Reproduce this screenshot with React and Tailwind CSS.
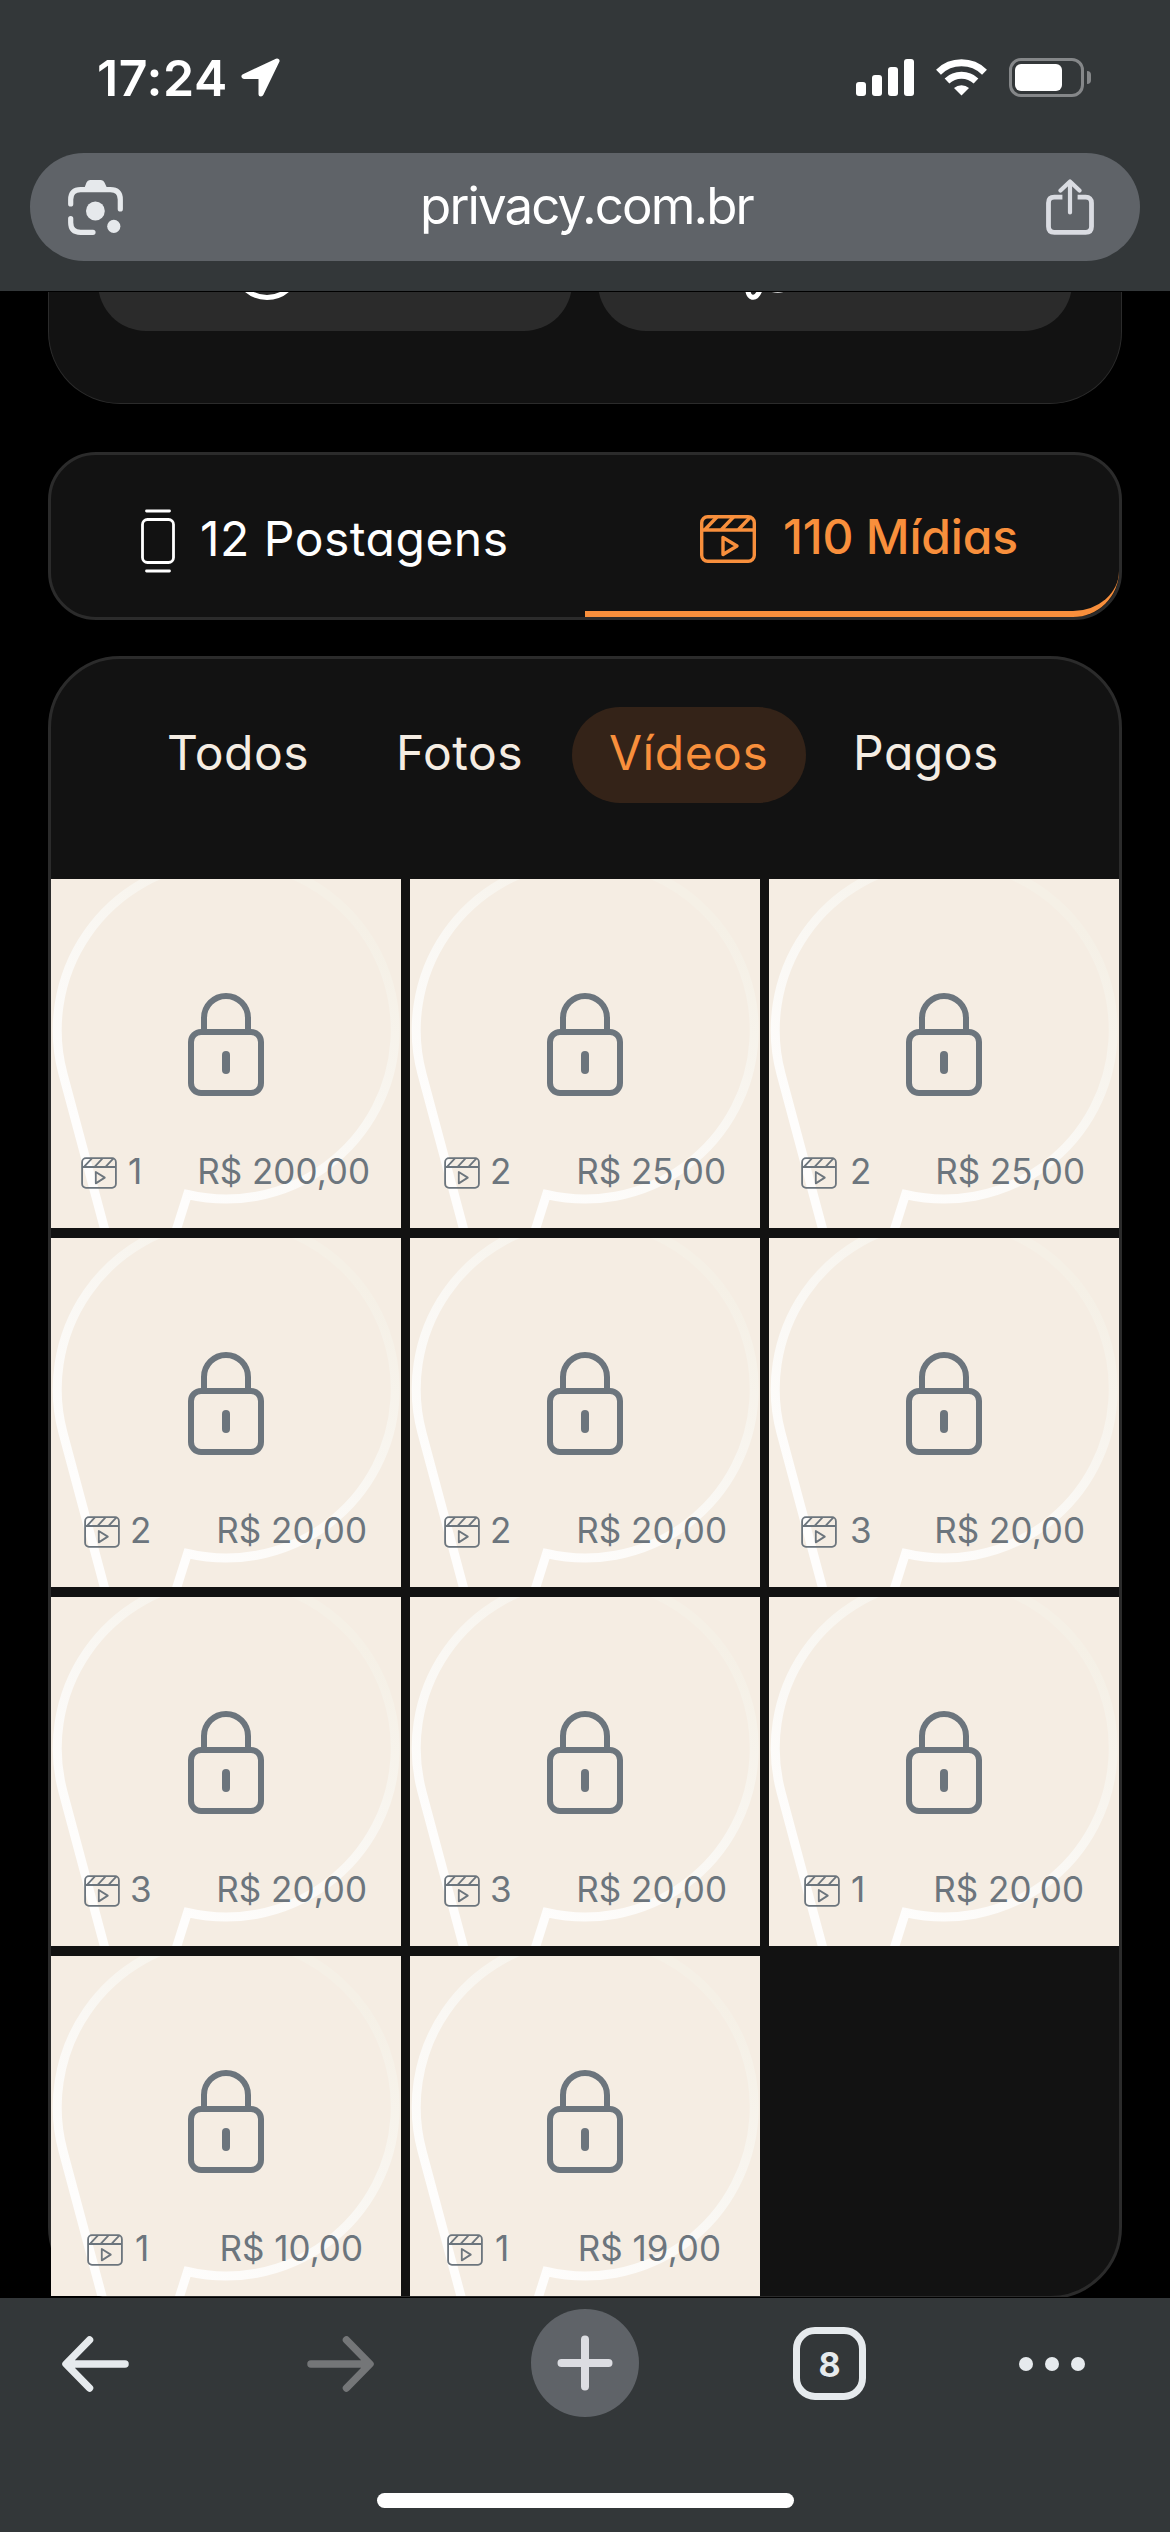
import { useState } from 'react';
import clsx from 'clsx';

const filters = [
  { name: 'Todos', className: 'w-[214px] pl-[36px]' },
  { name: 'Fotos', className: 'w-[227px] pl-[51px]' },
  { name: 'Vídeos', className: 'w-[234px] pl-[37px]' },
  { name: 'Pagos', className: 'w-[214px] pl-[47px]' },
];

const media = [
  { id: 1, count: 1, price: '200,00', className: 'pl-[30px] pr-[31px] gap-[11px]' },
  { id: 2, count: 2, price: '25,00', className: 'pl-[34px] pr-[34px] gap-[10px]' },
  { id: 3, count: 2, price: '25,00', className: 'pl-[32px] pr-[34px] gap-[13px]' },
  { id: 4, count: 2, price: '20,00', className: 'pl-[33px] pr-[34px] gap-[10px]' },
  { id: 5, count: 2, price: '20,00', className: 'pl-[34px] pr-[33px] gap-[10px]' },
  { id: 6, count: 3, price: '20,00', className: 'pl-[32px] pr-[34px] gap-[13px]' },
  { id: 7, count: 3, price: '20,00', className: 'pl-[33px] pr-[34px] gap-[10px]' },
  { id: 8, count: 3, price: '20,00', className: 'pl-[34px] pr-[33px] gap-[10px]' },
  { id: 9, count: 1, price: '20,00', className: 'pl-[35px] pr-[35px] gap-[11px]' },
  { id: 10, count: 1, price: '10,00', className: 'pl-[36px] pr-[38px] gap-[12px]' },
  { id: 11, count: 1, price: '19,00', className: 'pl-[37px] pr-[39px] gap-[12px]' },
];

function VideoIcon({ className, strokeWidth = 3.4 }) {
  return (
    <svg className={className} viewBox="0 0 56 48" preserveAspectRatio="none" fill="none" stroke="currentColor" strokeWidth={strokeWidth} strokeLinejoin="round">
      <rect x="1.7" y="1.7" width="52.6" height="44.6" rx="6" />
      <path d="M2 15h52M5 14.5L17 2M21.5 14.5L33.5 2M38.5 14.5L50.5 2M23 22.5v17l14-8.5z" />
    </svg>
  );
}

function LockIcon() {
  return (
    <svg className="w-[76px] h-[103px]" viewBox="0 0 76 103" fill="none" stroke="currentColor" strokeWidth="6">
      <rect x="3" y="39" width="70" height="61" rx="10" />
      <path d="M16 39V25a22 22 0 0 1 44 0v14" />
      <path d="M38 62v15" strokeWidth="8" strokeLinecap="round" />
    </svg>
  );
}

// Speech bubble watermark behind every locked item
function Watermark({ id }) {
  return (
    <svg className="absolute inset-0 w-[350px] h-[349px]" viewBox="0 0 350 349" fill="none">
      <linearGradient id={`fade-${id}`} gradientUnits="userSpaceOnUse" x1="90" y1="290" x2="290" y2="30">
        <stop offset="0" stopColor="#fefdfc" />
        <stop offset="0.45" stopColor="#faf8f4" />
        <stop offset="1" stopColor="#f5f0e6" />
      </linearGradient>
      <path d="M124 355L136.5 315.5A169 169 0 1 0 12 194.8L56 359" stroke={`url(#fade-${id})`} strokeWidth="9" />
    </svg>
  );
}

function MediaItem({ item }) {
  return (
    <div className="relative h-[349px] bg-[#f5ede3] text-[#6c757d] overflow-hidden">
      <Watermark id={item.id} />
      <div className="relative flex flex-col">
        <div className="flex justify-center pt-[114px]">
          <LockIcon />
        </div>
        <div className={clsx('flex items-center mt-[52px] h-[50px] text-[35px] leading-none', item.className)}>
          <VideoIcon className="w-9 h-8 shrink-0" strokeWidth={2.8} />
          <span className="pb-[3px]">{item.count}</span>
          <span className="ml-auto pb-[3px] whitespace-nowrap">R$ {item.price}</span>
        </div>
      </div>
    </div>
  );
}

function StatusBar() {
  return (
    <div className="flex items-center h-[153px] pt-[2px] pl-[97px] pr-[79px] text-white">
      <span className="w-[144px] text-[50px] leading-none font-semibold tracking-[0.6px]">17:24</span>
      <svg className="w-[39px] h-[39px]" viewBox="0 0 39 39" fill="currentColor" stroke="currentColor" strokeWidth="5" strokeLinejoin="round">
        <path d="M36 3L3 18.5H20V36z" />
      </svg>
      <div className="ml-auto flex items-center">
        <div className="flex items-end gap-[6px] h-[37px]">
          <div className="w-[10px] h-[14px] rounded-[3px] bg-white" />
          <div className="w-[10px] h-[21px] rounded-[3px] bg-white" />
          <div className="w-[10px] h-[29px] rounded-[3px] bg-white" />
          <div className="w-[10px] h-[37px] rounded-[3px] bg-white" />
        </div>
        <svg className="ml-[22px] w-[51px] h-[37px]" viewBox="0 0 51 37" fill="none" stroke="currentColor" strokeWidth="7">
          <path d="M2.5 13.2A33 33 0 0 1 48.5 13.2" />
          <path d="M11 22A21.5 21.5 0 0 1 40 22" />
          <path d="M25.5 36.5L18 29A11.5 11.5 0 0 1 33 29z" fill="currentColor" stroke="none" />
        </svg>
        <div className="ml-[22px] w-[75px] h-[39px] rounded-[12px] border-3 border-[#858789] p-[3px]">
          <div className="w-[47px] h-[27px] rounded-[6px] bg-white" />
        </div>
        <div className="ml-[3px] w-1 h-[13px] rounded-r-full bg-[#858789]" />
      </div>
    </div>
  );
}

function AddressBar() {
  return (
    <div className="mx-[30px] h-[108px] rounded-full bg-[#5f6368] flex items-center justify-between pl-[38px] pr-[46px]">
      <svg className="w-[55px] h-[55px]" viewBox="0 0 55 55" fill="none" stroke="#e6e9ec" strokeWidth="5.2" strokeLinecap="round">
        <path d="M2.7 24V19.5Q2.7 9.6 12.6 9.6H42.4Q52.3 9.6 52.3 19.5V29M2.7 38.5V42.5Q2.7 52.3 12.6 52.3H25" />
        <path d="M16 9L18.5 2.5Q19.5 0 22 0H33Q35.5 0 36.5 2.5L39.5 9z" fill="#e6e9ec" stroke="none" />
        <circle cx="27.4" cy="31" r="9.4" fill="#e6e9ec" stroke="none" />
        <circle cx="45.8" cy="46.3" r="6.6" fill="#e6e9ec" stroke="none" />
      </svg>
      <span className="pb-1 pl-1 text-[51px] leading-none text-white tracking-[-1.9px]">privacy.com.br</span>
      <svg className="w-12 h-14" viewBox="0 0 48 56" fill="none" stroke="#dadce2" strokeWidth="4.8" strokeLinecap="round" strokeLinejoin="round">
        <path d="M16.4 18.2H8.4Q2.5 18.2 2.5 24V47.5Q2.5 53.3 8.4 53.3H39.6Q45.5 53.3 45.5 47.5V24Q45.5 18.2 39.6 18.2H31.6" strokeLinecap="butt" />
        <path d="M24 3V33.5M14.5 11.5L24 2.5L33.5 11.5" strokeWidth="4.2" />
      </svg>
    </div>
  );
}

function ProfileActions() {
  return (
    <div className="mx-12 h-[112px] overflow-hidden rounded-b-[72px] border border-t-0 border-[#2b2b2b] bg-[#121212] flex justify-center gap-[26px]">
      <div className="-mt-[91px] h-[130px] w-[474px] rounded-[48px] bg-[#2b2b2b] flex items-center pl-[135px]">
        <div className="w-[68px] h-[68px] rounded-full border-[5px] border-white" />
      </div>
      <div className="-mt-[91px] h-[130px] w-[474px] rounded-[48px] bg-[#2b2b2b] flex items-center pl-[147px]">
        <svg className="w-12 h-[68px]" viewBox="0 0 48 68" fill="none" stroke="white" strokeWidth="5" strokeLinecap="round">
          <path d="M2.5 54C2.5 68 11 68.5 15 58M23 56Q33 60.5 42 56" />
        </svg>
      </div>
    </div>
  );
}

function Tabs() {
  return (
    <div className="mx-12 mt-12 h-[168px] rounded-[48px] border-3 border-[#2b2b2b] bg-[#121212] flex">
      <button className="w-[534px] flex items-center pl-[90px] pt-[9px] text-white">
        <svg className="w-[34px] h-16 shrink-0" viewBox="0 0 34 64" fill="none" stroke="currentColor" strokeWidth="2.8" strokeLinecap="round">
          <rect x="1.5" y="10.5" width="31" height="43" rx="5" />
          <path d="M5.5 2h23M5.5 62h23" />
        </svg>
        <span className="ml-[25px] pb-[3px] text-[48px] leading-none tracking-[0.5px] whitespace-nowrap">12 Postagens</span>
      </button>
      <button className="flex-1 flex items-center pl-[115px] pt-[12px] rounded-r-[46px] border-b-6 border-[#f88f3c] text-[#f88f3c]">
        <VideoIcon className="w-14 h-12 shrink-0" />
        <span className="ml-[27px] pb-[5px] text-[48px] leading-none font-medium tracking-[-0.2px] whitespace-nowrap">110 Mídias</span>
      </button>
    </div>
  );
}

function Toolbar() {
  return (
    <div className="h-[234px] shrink-0 bg-[#333739] flex flex-col items-center">
      <div className="w-full h-[131px] flex items-center pl-[62px]">
        <svg className="w-[67px] h-[56px]" viewBox="0 0 67 56" fill="none" stroke="#e6eaed" strokeWidth="7.5" strokeLinecap="round" strokeLinejoin="round">
          <path d="M63 28H5M27.5 4L4 28L27.5 52" />
        </svg>
        <svg className="w-[67px] h-[56px] ml-[178px]" viewBox="0 0 67 56" fill="none" stroke="#747678" strokeWidth="7.5" strokeLinecap="round" strokeLinejoin="round">
          <path d="M4 28H62M39.5 4L63 28L39.5 52" />
        </svg>
        <button className="w-[108px] h-[108px] ml-[157px] -mt-px rounded-full bg-[#5f6368] flex items-center justify-center">
          <svg className="w-14 h-14" viewBox="0 0 56 56" stroke="#dcdde2" strokeWidth="8" strokeLinecap="round">
            <path d="M4.5 28h47M28 4.5v47" />
          </svg>
        </button>
        <button className="w-[73px] h-[73px] ml-[154px] rounded-[22px] border-[7px] border-[#e6eaed] flex items-center justify-center pt-[3px] text-[34px] leading-none font-bold text-[#e6eaed]">
          8
        </button>
        <div className="flex gap-3 ml-[153px]">
          <div className="w-[14px] h-[14px] rounded-full bg-[#e6eaed]" />
          <div className="w-[14px] h-[14px] rounded-full bg-[#e6eaed]" />
          <div className="w-[14px] h-[14px] rounded-full bg-[#e6eaed]" />
        </div>
      </div>
      <div className="mt-16 w-[417px] h-[15px] rounded-full bg-white" />
    </div>
  );
}

export default function App() {
  const [active, setActive] = useState('Vídeos');

  return (
    <div className="w-[1170px] h-[2532px] overflow-hidden bg-black flex flex-col font-['Inter',sans-serif]">
      <header className="h-[291px] shrink-0 bg-[#333739]">
        <StatusBar />
        <AddressBar />
      </header>

      <main className="h-[2007px] shrink-0 overflow-hidden border-y border-black [font-feature-settings:'cv11']">
        <ProfileActions />
        <Tabs />

        <section className="mx-12 mt-9 h-[1643px] rounded-[72px] border-3 border-[#2b2b2b] bg-[#121212]">
          <div className="flex h-[220px] pt-12 pl-[80px]">
            {filters.map((filter) => (
              <button
                key={filter.name}
                onClick={() => setActive(filter.name)}
                className={clsx(
                  'h-24 shrink-0 rounded-[48px] pb-1 text-left text-[48px] leading-none tracking-[0.5px]',
                  filter.className,
                  filter.name === active ? 'bg-[#342318] text-[#f88f3c]' : 'text-[#f5ede3]'
                )}
              >
                {filter.name}
              </button>
            ))}
          </div>

          <div className="grid grid-cols-[350px_350px_350px] gap-x-[9px] gap-y-[10px] h-[1417px] overflow-hidden">
            {media.map((item) => (
              <MediaItem key={item.id} item={item} />
            ))}
          </div>
        </section>
      </main>

      <Toolbar />
    </div>
  );
}
